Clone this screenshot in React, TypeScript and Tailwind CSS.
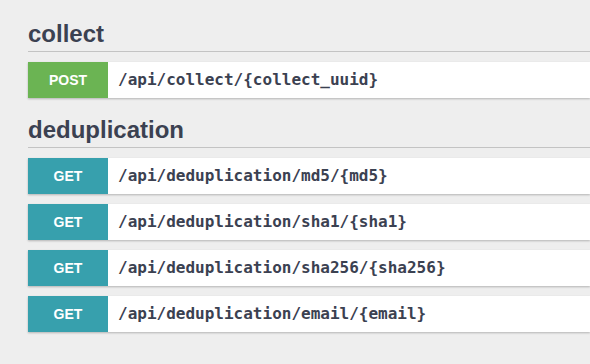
const sections = [
  {
    tag: 'collect',
    ops: [{ method: 'POST', path: '/api/collect/{collect_uuid}' }],
  },
  {
    tag: 'deduplication',
    ops: [
      { method: 'GET', path: '/api/deduplication/md5/{md5}' },
      { method: 'GET', path: '/api/deduplication/sha1/{sha1}' },
      { method: 'GET', path: '/api/deduplication/sha256/{sha256}' },
      { method: 'GET', path: '/api/deduplication/email/{email}' },
    ],
  },
]

export default function App() {
  return (
    <div className="h-[364px] w-[590px] overflow-hidden bg-[#eeeeee] pl-[28px] pt-[16px]">
      {sections.map((section) => (
        <div key={section.tag}>
          <div className="flex h-[36px] items-center border-b border-[#c3c3c3] font-['Liberation_Sans',Arial,sans-serif] text-[24px] font-bold text-[#3b4151]">
            {section.tag}
          </div>
          <div className="mt-[10px] flex flex-col gap-[10px] pb-[14px]">
            {section.ops.map((op) => (
              <OpRow key={op.path} method={op.method} path={op.path} />
            ))}
          </div>
        </div>
      ))}
    </div>
  )
}

function OpRow({ method, path }: { method: string; path: string }) {
  const color = method === 'POST' ? 'bg-[#6bb453]' : 'bg-[#37a0ad]'
  return (
    <div className="flex h-[36px] items-stretch bg-white shadow-[0_1px_2px_rgba(0,0,0,0.25)]">
      <div
        className={`flex w-[80px] shrink-0 items-center justify-center font-['Liberation_Sans',Arial,sans-serif] text-[14px] font-bold text-white ${color}`}
      >
        {method}
      </div>
      <div className="flex items-center pl-[10px] font-['DejaVu_Sans_Mono',monospace] text-[16px] font-bold text-[#3b4151]">
        {path}
      </div>
    </div>
  )
}
